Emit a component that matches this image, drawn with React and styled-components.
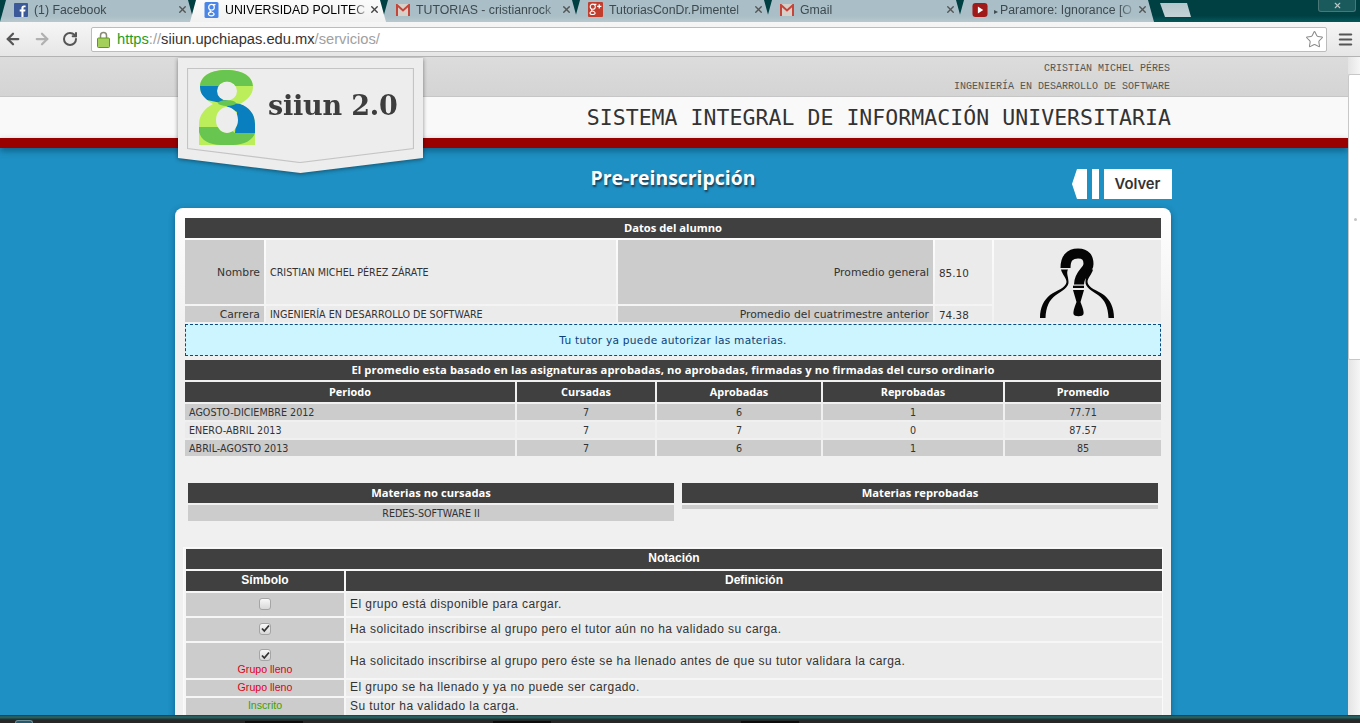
import React from 'react';
import styled, { createGlobalStyle } from 'styled-components';
import { ArrowLeft, ArrowRight, RotateCw, Star, X, Menu } from 'lucide-react';

const Global = createGlobalStyle`
  html, body { margin: 0; padding: 0; height: 100%; overflow: hidden; }
  * { box-sizing: border-box; }
`;

const Screen = styled.div`
  width: 1360px; height: 723px; overflow: hidden; display: flex; flex-direction: column;
  font-family: "Liberation Sans", Arial, sans-serif; background: #1e90c3;
`;

/* ---------- browser chrome ---------- */
const TabStrip = styled.div`
  height: 22px; flex: none; display: flex; background: linear-gradient(#003f42 70%, #04585a);
  position: relative;
`;
const Tab = styled.div`
  width: ${p => p.$w}px; flex: none; height: 22px; display: flex; align-items: center;
  margin-right: -4px; padding: 0 6px 3px 14px; gap: 6px;
  clip-path: polygon(6px 0, calc(100% - 6px) 0, 100% 100%, 0 100%);
  background: ${p => p.$active ? 'linear-gradient(#fbfbfb,#f1f1f1)' : 'linear-gradient(#a9bec6 70%, #b9c8ce)'};
  color: ${p => p.$active ? '#000' : '#3e4a4f'};
  font-size: 12.3px; position: relative; z-index: ${p => p.$active ? 2 : 1};
`;
const TabTitle = styled.span`
  flex: 1; white-space: nowrap; min-width: 0; margin-right: -2px;
  -webkit-mask-image: linear-gradient(90deg, #000 90%, rgba(0,0,0,.25));
  mask-image: linear-gradient(90deg, #000 90%, rgba(0,0,0,.25));
`;
const TabArrow = styled.span` font-size: 8px; margin-right: 2px; `;
const TabClose = styled(X)`
  flex: none; width: 11px; height: 11px; color: ${p => p.$active ? '#444' : '#555'}; stroke-width: 3;
`;
const NewTab = styled.div`
  width: 31px; height: 14px; margin: 3px 0 0 10px; flex: none;
  background: linear-gradient(#b4c6cc, #c4d2d6);
  clip-path: polygon(0 0, 27px 0, 100% 100%, 5px 100%);
`;
const WindowClose = styled.div`
  position: absolute; right: 4px; top: -1px; width: 38px; height: 13px; border: 1px solid #4b7678;
  border-top: 0; border-radius: 0 0 3px 3px; background: #1a5a5d; color: #b5c8c8; display: flex;
  align-items: center; justify-content: center;
`;
const ToolBar = styled.div`
  height: 35px; flex: none; display: flex; align-items: center; padding: 0 0 0 4px;
  background: linear-gradient(#f6f6f6, #e6e6e6); border-bottom: 1px solid #b3b3b3;
`;
const NavIcon = styled.div`
  width: 29px; flex: none; display: flex; align-items: center; color: ${p => p.$dim ? '#b0b0b0' : '#555'};
`;
const Omnibox = styled.div`
  width: 1236px; flex: none; height: 25px; border: 1px solid #bcbcbc; border-radius: 2px; background: #fff;
  display: flex; align-items: center; padding: 0 2px 0 5px; font-size: 14.7px; color: #333;
`;
const LockIcon = styled.svg` width: 13px; height: 17px; flex: none; margin-right: 7px; `;
const Url = styled.div` flex: 1; white-space: nowrap; `;
const Https = styled.span` color: #1f9e1f; `;
const Faint = styled.span` color: #a0a0a0; `;
const MenuBtn = styled.div` margin-left: 10px; color: #555; display: flex; `;

/* ---------- web page ---------- */
const Viewport = styled.div` flex: 1; display: flex; min-height: 0; `;
const Page = styled.div`
  flex: 1; min-width: 0; position: relative; overflow: hidden; background: #1e90c3;
`;
const TopBand = styled.div`
  height: 40px; background: linear-gradient(#dcdcdc, #d4d4d4); border-bottom: 1px solid #c6c6c6;
  padding: 3px 178px 0 0; text-align: right; font: 10px/18px "Liberation Mono", monospace; color: #555;
`;
const TitleBand = styled.div`
  height: 41px; background: #f9f9f9; padding: 9px 177px 0 0; text-align: right;
  font: 21.5px/24px "DejaVu Sans Mono", monospace; color: #333; white-space: nowrap; letter-spacing: .04px;
`;
const RedBand = styled.div`
  height: 10px; background: #990000; box-shadow: 0 3px 6px rgba(0,60,90,.55);
`;
const LogoShadow = styled.div`
  position: absolute; left: 178px; top: 1px; z-index: 3; filter: drop-shadow(0 1px 2px rgba(0,0,0,.45));
`;
const Logo = styled.div`
  width: 245px; height: 115px; background: #ededed;
  clip-path: polygon(0 0, 100% 0, 100% 87%, 50% 100%, 0 87%);
  padding: 10px 9px 0 9px;
`;
const LogoFrame = styled.div` height: 94px; position: relative; `;
const LogoBorder = styled.svg` position: absolute; left: 0; top: 0; width: 227px; height: 95px; `;
const LogoText = styled.div`
  position: absolute; left: 81px; top: 21px;
  font: bold 27px/34px "DejaVu Serif", "Liberation Serif", serif; color: #3d3d3d; white-space: nowrap; letter-spacing: -.2px;
`;
const LogoMark = styled.svg` position: absolute; left: 12px; top: 2px; width: 56px; height: 75px; `;

const TitleRow = styled.div`
  height: 60px; display: flex; align-items: flex-start; position: relative; padding-top: 19px; justify-content: center;
`;
const PageTitle = styled.h1`
  margin: 0; font: bold 19.4px/22px "Open Sans", sans-serif; color: #fff; text-shadow: 1px 2px 2px #1c3a50;
  width: 1344px; text-align: center; margin-right: 2px;
`;
const Back = styled.div`
  position: absolute; left: 1072px; top: 21px; display: flex; gap: 5px; height: 30px;
`;
const BackArrow = styled.div`
  width: 15px; background: #fff; clip-path: polygon(5px 0, 100% 0, 100% 100%, 5px 100%, 0 50%);
`;
const BackBar = styled.div` width: 7px; background: #fff; `;
const BackLabel = styled.div`
  width: 68px; background: #fff; font: 600 14.8px/30px Inter, sans-serif; text-align: center; color: #333;
  padding-right: 1px;
`;

const Card = styled.div`
  width: 996px; margin-left: 175px; padding: 10px 10px 0; border-radius: 8px 8px 0 0;
  background: linear-gradient(#ffffff, #f0f0f0 130px); box-shadow: 0 2px 6px rgba(0,40,70,.45);
  font: 10.3px/16px "DejaVu Sans", Verdana, sans-serif; color: #333; height: 560px;
`;
const Grid = styled.div`
  display: grid; grid-template-columns: ${p => p.$cols}; gap: 2px; width: 976px;
  font-size: 10px; margin-top: ${p => p.$mt || 0}px;
`;
const DarkBar = styled.div`
  grid-column: 1 / -1; height: 20px; background: #404040; color: #fff; text-align: center;
  font: bold 11.2px/20px "Open Sans", sans-serif; letter-spacing: ${p => p.$ls || 0}px;
`;
const Head = styled.div`
  height: 20px; background: #404040; color: #fff; text-align: center;
  font: bold 10.9px/20px "Open Sans", sans-serif;
`;
const Label = styled.div`
  background: #ccc; display: flex; align-items: center; justify-content: flex-end; padding: 1px 4px 0 0;
  font-size: 10.8px; line-height: 14px; height: ${p => p.$h}px;
`;
const Value = styled.div`
  background: #ebebeb; display: flex; align-items: center; padding: 1px 0 0 4px; font-size: 9.6px; line-height: 14px;
`;
const NumVal = styled(Value)` font-size: 10.4px; `;
const PhotoCell = styled.div`
  grid-row: span 2; background: #ebebeb; display: flex; justify-content: center; align-items: flex-start;
  overflow: hidden;
`;
const FigureSvg = styled.svg` width: 95px; height: 78px; margin: 5px 0 -1px; flex: none; `;
const Notice = styled.div`
  margin-top: 2px; height: 32px; border: 1px dashed #0b4a80; background: #ccf5ff; color: #0b3f78;
  text-align: center; line-height: 30px; font-size: 10.6px; letter-spacing: .27px; width: 976px;
`;
const Cell = styled.div`
  height: 16px; background: ${p => p.$light ? '#ebebeb' : '#ccc'}; text-align: ${p => p.$left ? 'left' : 'center'};
  padding: 1px 0 0 ${p => p.$left ? 4 : 0}px; font-size: 9.6px; line-height: 15px; white-space: nowrap;
`;
const Subjects = styled.div` display: flex; gap: 8px; margin: 27px 0 0 3px; `;
const SubjectCol = styled.div` width: ${p => p.$w}px; flex: none; `;
const SubjectHead = styled(DarkBar)` margin-bottom: 2px; `;
const SubjectRow = styled.div`
  height: ${p => p.$h}px; background: #ccc; text-align: center; font-size: 9.6px; line-height: 16px;
  padding-top: ${p => p.$h > 10 ? 1 : 0}px; overflow: hidden;
`;
const Legend = styled.div`
  margin: 26px 0 0 -2px; width: 980px; padding: 1px 2px; background: #f6f6f6; border: 1px solid #fafafa; border-bottom: 0;
`;
const LegendGrid = styled.div` display: grid; grid-template-columns: 158px 816px; gap: 2px; `;
const LegendHead = styled.div`
  height: 20px; background: #404040; color: #fff; text-align: center; font: bold 12px/19px "Liberation Sans", sans-serif;
  ${p => p.$span && 'grid-column: 1 / -1;'}
`;
const Sym = styled.div`
  height: ${p => p.$h}px; background: #ccc; display: flex; flex-direction: column; align-items: center; justify-content: center;
  font: 10.6px/14px "Liberation Sans", sans-serif; color: ${p => p.$c || '#333'};
  padding: ${p => p.$pt || 0}px 0 ${p => p.$pb || 0}px;
`;
const SymNote = styled.span` margin-top: 1px; `;
const Def = styled.div`
  height: ${p => p.$h}px; background: #ebebeb; display: flex; align-items: center; padding: 0 0 ${p => p.$pb ?? 2}px 4px;
  font: 12px/14px "Liberation Sans", sans-serif; letter-spacing: .44px; color: #333;
`;
const Check = styled.span`
  width: 12px; height: 12px; border: 1px solid #a5a5a5; border-radius: 3px; display: flex; align-items: center; justify-content: center;
  background: linear-gradient(#f8f8f8, #d8d8d8);
`;
const Scrollbar = styled.div`
  width: 12px; flex: none; background: linear-gradient(90deg,#e4e4e4,#f6f6f6); position: relative;
`;
const Thumb = styled.div`
  position: absolute; left: 0; right: 0; top: 17px; height: 286px; background: #fff; border: 1px solid #c8c8c8; border-right: 0;
  border-radius: 2px 0 0 2px;
`;
const Grip = styled.span`
  position: absolute; right: 3px; top: 143px; width: 3px; height: 3px; border-radius: 50%; background: #c4c4c4;
`;
const Taskbar = styled.div`
  height: 8px; flex: none; display: flex; align-items: flex-end; padding-left: 15px;
  background: linear-gradient(#0c3f46 0, #2e6868 2px, #1e3e3e 4px, #262626 5px);
`;
const Orb = styled.span`
  width: 18px; height: 3px; flex: none; border: 1px solid #6d8f9a; border-bottom: 0; border-radius: 9px 9px 0 0; background: #28566a;
`;
const TaskButton = styled.span`
  width: ${p => p.$w}px; height: 2px; margin-left: ${p => p.$ml}px; flex: none; background: #0c0c0c;
`;

const gMark = "M7 2.300c-1.700 0-2.800 1.200-2.800 2.900S5.300 8 7 8s2.800-1.100 2.800-2.800S8.700 2.300 7 2.300zM11 2.600H7.500M9.200 3.200v1M6 8c-.8 .7-.5 1.300 .6 1.800 1.600 .7 3 1.200 3 2.300 0 1.100-1.200 1.700-2.800 1.700-1.500 0-2.900-.6-2.900-1.800 0-1 1-1.700 2.500-1.900";

const Fb = () => <svg width="14" height="14" viewBox="0 0 14 14"><rect width="14" height="14" rx="1" fill="#3b5998"/><path d="M9.5 14V8.6h1.7l.3-2H9.5V5.3c0-.6.2-1 1-1h1.100V2.500C11.300 2.400 10.700 2.400 10 2.400 8.400 2.400 7.400 3.300 7.400 5v1.600H5.700v2h1.700V14z" fill="#fff"/></svg>;
const G = () => <svg width="15" height="16" viewBox="0 0 14 16"><rect width="14" height="16" rx="1.500" fill="#4a86e8"/><path d={gMark} fill="none" stroke="#fff" strokeWidth="1.200"/></svg>;
const Gm = () => <svg width="14" height="12" viewBox="0 0 14 12"><rect width="14" height="12" fill="#d8d0c8"/><path d="M1 12V1l6 5.500L13 1v11" fill="none" stroke="#c5453a" strokeWidth="2"/></svg>;
const Gp = () => <svg width="15" height="15" viewBox="0 0 14 14"><rect width="14" height="14" rx="1" fill="#c13d2e"/><path d={gMark} fill="none" stroke="#fff" strokeWidth="1.200" transform="translate(-1.500 0) scale(.85)"/><path d="M10.500 2v4M8.500 4h4" stroke="#fff" strokeWidth="1.200"/></svg>;
const Yt = () => <svg width="16" height="14" viewBox="0 0 14 13"><rect width="14" height="13" rx="3" fill="#a11a1a"/><path d="M5 3.200l5 3.300-5 3.300z" fill="#fff"/></svg>;

const tabs = [
  { w: 194, icon: <Fb />, title: '(1) Facebook' },
  { w: 196, icon: <G />, title: 'UNIVERSIDAD POLITEC', active: true },
  { w: 196, icon: <Gm />, title: 'TUTORIAS - cristianrock' },
  { w: 196, icon: <Gp />, title: 'TutoriasConDr.Pimentel' },
  { w: 196, icon: <Gm />, title: 'Gmail' },
  { w: 196, icon: <Yt />, arrow: true, title: 'Paramore: Ignorance [O' },
];

const periods = [
  ['AGOSTO-DICIEMBRE 2012', '7', '6', '1', '77.71'],
  ['ENERO-ABRIL 2013', '7', '7', '0', '87.57'],
  ['ABRIL-AGOSTO 2013', '7', '6', '1', '85'],
];

const CheckBox = ({ on }) => (
  <Check>{on && <svg width="9" height="9" viewBox="0 0 9 9"><path d="M1 4.500l2.300 2.500L8 1.500" fill="none" stroke="#333" strokeWidth="1.800"/></svg>}</Check>
);

const shoulder = "M31 24.500H38C36 28 38.500 32 38.500 37 39 42 32 46 26 50 19 55 16 62 15.500 73H10C10 62 14 55 20 50 27 45 36 43 36.500 37 36.500 33 32 29 31 24.500z";

const Figure = () => (
  <FigureSvg viewBox="0 0 95 78">
    <path d="M35.500 23C35.500 13 40 8.500 48 8.500 56 8.500 58.500 13 58.500 19 58.500 26 49 28 49 39.500" fill="none" stroke="#050505" strokeWidth="10" />
    <rect x="43" y="40.700" width="11" height="2.300" fill="#050505" />
    <path d="M43 45H54L50.500 57C53 63 54 67 53.500 69 53 72 44 72 43.500 69 43 67 44 63 46.500 57z" fill="#050505" />
    <path d={shoulder} fill="#050505" />
    <path d={shoulder} fill="#050505" transform="translate(94 0) scale(-1 1)" />
  </FigureSvg>
);

export default function App() {
  return (
    <Screen>
      <Global />
      <TabStrip>
        {tabs.map(t => (
          <Tab key={t.title} $w={t.w} $active={t.active}>
            {t.icon}
            <TabTitle>{t.arrow && <TabArrow>▸</TabArrow>}{t.title}</TabTitle>
            <TabClose $active={t.active} />
          </Tab>
        ))}
        <NewTab />
        <WindowClose><X size={9} strokeWidth={3} /></WindowClose>
      </TabStrip>
      <ToolBar>
        <NavIcon><ArrowLeft size={18} strokeWidth={3} /></NavIcon>
        <NavIcon $dim><ArrowRight size={18} strokeWidth={3} /></NavIcon>
        <NavIcon><RotateCw size={16} strokeWidth={3} /></NavIcon>
        <Omnibox>
          <LockIcon viewBox="0 0 13 17">
            <path d="M3.500 7V4.500a3 3 0 0 1 6 0V7" fill="none" stroke="#8a8a78" strokeWidth="1.500" />
            <rect x=".5" y="7" width="12" height="9.500" rx="1" fill="#a4cf5a" stroke="#5c9a1e" />
          </LockIcon>
          <Url><Https>https</Https><Faint>://</Faint>siiun.upchiapas.edu.mx<Faint>/servicios/</Faint></Url>
          <Star size={19} color="#8a8a8a" strokeWidth={1.300} />
        </Omnibox>
        <MenuBtn><Menu size={17} strokeWidth={3} /></MenuBtn>
      </ToolBar>
      <Viewport>
        <Page>
          <TopBand>
            CRISTIAN MICHEL PÉRES<br />INGENIERÍA EN DESARROLLO DE SOFTWARE
          </TopBand>
          <TitleBand>SISTEMA INTEGRAL DE INFORMACIÓN UNIVERSITARIA</TitleBand>
          <RedBand />
          <LogoShadow>
            <Logo>
              <LogoFrame>
                <LogoBorder viewBox="0 0 227 95">
                  <path d="M.5 .5H226.500V80.500L113 94.500 .5 80.500z" fill="none" stroke="#c4c4c4" strokeWidth="1.200" />
                </LogoBorder>
                <LogoMark viewBox="0 0 56 75">
                  <defs>
                    <clipPath id="eight">
                      <path clipRule="evenodd" d="M27 0C45 0 54 7 54 17 54 25 48 30 41 34 50 37 56 44 56 54V75H0V54C0 45 6 38 14 34 7 30 1 25 1 17 1 7 10 0 27 0zM18 21a10 9.500 0 1 0 20 0a10 9.500 0 1 0 -20 0zM17 50a11 13 0 1 0 22 0a11 13 0 1 0 -22 0z" />
                    </clipPath>
                  </defs>
                  <g clipPath="url(#eight)">
                    <rect width="56" height="75" fill="#bcee5c" />
                    <rect width="56" height="16" fill="#68c650" />
                    <path d="M0 16H20L24 28 34 33 56 36V63H36L38 42 22 33 8 30 0 22z" fill="#0a7fc0" />
                    <ellipse cx="28" cy="33" rx="9" ry="3" fill="#68c650" />
                    <path d="M0 57H28L36 63H56C54 70 45 75 34 75H22C10 75 2 70 0 62z" fill="#68c650" />
                  </g>
                </LogoMark>
                <LogoText>siiun 2.0</LogoText>
              </LogoFrame>
            </Logo>
          </LogoShadow>
          <TitleRow>
            <PageTitle>Pre-reinscripción</PageTitle>
            <Back>
              <BackArrow /><BackBar /><BackLabel>Volver</BackLabel>
            </Back>
          </TitleRow>
          <Card>
            <Grid $cols="79px 350px 315px 57px 167px">
              <DarkBar>Datos del alumno</DarkBar>
              <Label $h={64}>Nombre</Label>
              <Value>CRISTIAN MICHEL PÉREZ ZÁRATE</Value>
              <Label>Promedio general</Label>
              <NumVal>85.10</NumVal>
              <PhotoCell><Figure /></PhotoCell>
              <Label $h={16}>Carrera</Label>
              <Value>INGENIERÍA EN DESARROLLO DE SOFTWARE</Value>
              <Label>Promedio del cuatrimestre anterior</Label>
              <NumVal>74.38</NumVal>
            </Grid>
            <Notice>Tu tutor ya puede autorizar las materias.</Notice>
            <Grid $cols="330px 138px 164px 180px 156px" $mt={4}>
              <DarkBar $ls={0.13}>El promedio esta basado en las asignaturas aprobadas, no aprobadas, firmadas y no firmadas del curso ordinario</DarkBar>
              <Head>Periodo</Head><Head>Cursadas</Head><Head>Aprobadas</Head><Head>Reprobadas</Head><Head>Promedio</Head>
              {periods.map((r, i) => r.map((v, j) => (
                <Cell key={`${i}-${j}`} $left={j === 0} $light={i === 1}>{v}</Cell>
              )))}
            </Grid>
            <Subjects>
              <SubjectCol $w={486}>
                <SubjectHead>Materias no cursadas</SubjectHead>
                <SubjectRow $h={16}>REDES-SOFTWARE II</SubjectRow>
              </SubjectCol>
              <SubjectCol $w={476}>
                <SubjectHead>Materias reprobadas</SubjectHead>
                <SubjectRow $h={4} />
              </SubjectCol>
            </Subjects>
            <Legend>
              <LegendGrid>
                <LegendHead $span>Notación</LegendHead>
                <LegendHead>Símbolo</LegendHead><LegendHead>Definición</LegendHead>
                <Sym $h={23} $pb={2}><CheckBox /></Sym><Def $h={23}>El grupo está disponible para cargar.</Def>
                <Sym $h={23} $pb={2}><CheckBox on /></Sym><Def $h={23}>Ha solicitado inscribirse al grupo pero el tutor aún no ha validado su carga.</Def>
                <Sym $h={35} $c="#e00018" $pt={4}><CheckBox on /><SymNote>Grupo lleno</SymNote></Sym><Def $h={35} $pb={0}>Ha solicitado inscribirse al grupo pero éste se ha llenado antes de que su tutor validara la carga.</Def>
                <Sym $h={16} $c="#e00018" $pb={2}>Grupo lleno</Sym><Def $h={16}>El grupo se ha llenado y ya no puede ser cargado.</Def>
                <Sym $h={17} $c="#3fa000" $pb={3}>Inscrito</Sym><Def $h={17}>Su tutor ha validado la carga.</Def>
              </LegendGrid>
            </Legend>
          </Card>
        </Page>
        <Scrollbar><Thumb><Grip /></Thumb></Scrollbar>
      </Viewport>
      <Taskbar>
        <Orb />
        <TaskButton $w={58} $ml={212} />
        <TaskButton $w={58} $ml={190} />
        <TaskButton $w={58} $ml={190} />
      </Taskbar>
    </Screen>
  );
}
